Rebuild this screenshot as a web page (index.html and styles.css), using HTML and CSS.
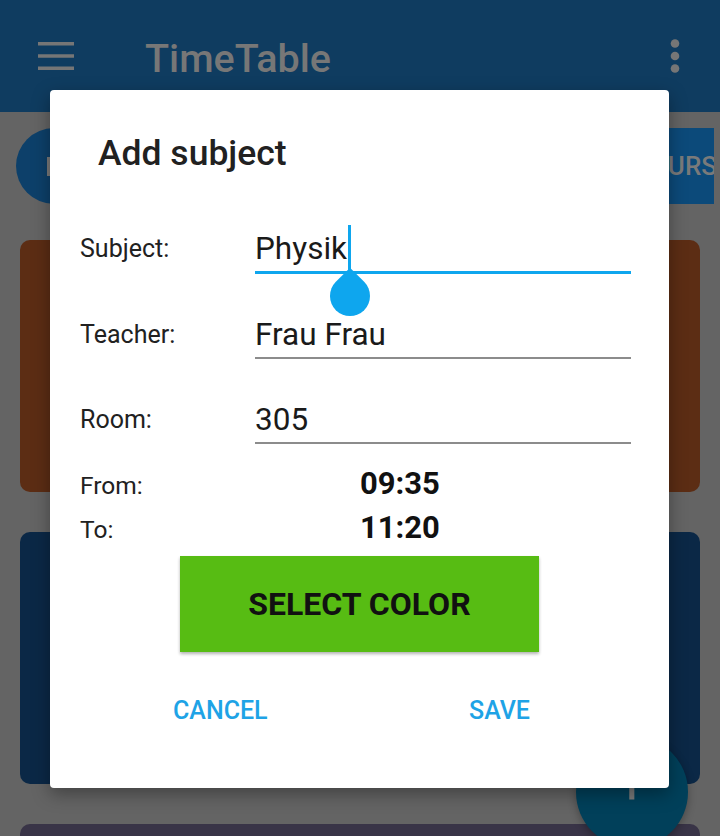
FILE: index.html
```html
<!DOCTYPE html>
<html>
<head>
<meta charset="utf-8">
<link rel="stylesheet" href="styles.css">
</head>
<body>
<div class="screen">
  <header class="appbar">
    <svg class="menu" width="36" height="28" viewBox="0 0 36 28"><rect x="0" y="0" width="36" height="3.5" fill="#767676"/><rect x="0" y="12.25" width="36" height="3.5" fill="#767676"/><rect x="0" y="24.5" width="36" height="3.5" fill="#767676"/></svg>
    <div class="apptitle">TimeTable</div>
    <svg class="dots" width="10" height="34" viewBox="0 0 10 34"><circle cx="5" cy="4.5" r="4.3" fill="#767676"/><circle cx="5" cy="17" r="4.3" fill="#767676"/><circle cx="5" cy="29.5" r="4.3" fill="#767676"/></svg>
  </header>
  <div class="tabs">
    <div class="tab tab-pill"></div>
    <div class="tab tab-rect"><span>THURS</span></div>
  </div>
  <div class="cards">
    <div class="card card-orange"></div>
    <div class="card card-blue"></div>
    <div class="card card-purple"></div>
  </div>
  <div class="fab"><span class="plus">+</span></div>

  <div class="dialog">
    <div class="dtitle">Add subject</div>
    <div class="form">
      <div class="row">
        <div class="label">Subject:</div>
        <div class="field active">Physik<span class="cursor"></span><span class="handle"></span></div>
      </div>
      <div class="row">
        <div class="label">Teacher:</div>
        <div class="field">Frau Frau</div>
      </div>
      <div class="row">
        <div class="label">Room:</div>
        <div class="field">305</div>
      </div>
      <div class="time-row first">
        <div class="tlabel">From:</div>
        <div class="tvalue">09:35</div>
      </div>
      <div class="time-row">
        <div class="tlabel">To:</div>
        <div class="tvalue">11:20</div>
      </div>
    </div>
    <div class="btnwrap"><div class="colorbtn">SELECT COLOR</div></div>
    <div class="actions">
      <div class="action">CANCEL</div>
      <div class="action">SAVE</div>
    </div>
  </div>
</div>
</body>
</html>
```
FILE: styles.css
```css
html, body {
  margin: 0;
  padding: 0;
}
.screen {
  width: 720px;
  height: 836px;
  position: relative;
  overflow: hidden;
  background: #646464;
  font-family: Roboto, "Noto Sans", sans-serif;
}
.appbar {
  height: 112px;
  background: #0f3c60;
  display: flex;
  align-items: center;
  padding: 0 40px 0 38px;
  box-sizing: border-box;
}
.menu { display: block; }
.apptitle {
  margin-left: 71px;
  margin-top: 6px;
  font-size: 39.5px;
  font-weight: 500;
  color: #777;
  line-height: 44px;
}
.dots { margin-left: auto; display: block; }
.tabs {
  display: flex;
  justify-content: space-between;
  padding: 16px 6px 0 16px;
}
.tab {
  height: 76px;
  display: flex;
  align-items: center;
  font-size: 26px;
  font-weight: 500;
  color: #7a7a7a;
}
.tab-pill {
  width: 180px;
  border-radius: 38px;
  background: #0d406a;
  position: relative;
}
.tab-pill::before {
  content: "";
  position: absolute;
  left: 31px;
  top: 29px;
  width: 4px;
  height: 19px;
  background: #7a7a7a;
}
.tab-rect {
  width: 200px;
  background: #0c4a7a;
  justify-content: flex-end;
  overflow: hidden;
}
.tab-rect span { margin-right: -3px; }
.cards {
  padding: 36px 20px 0;
  display: flex;
  flex-direction: column;
  gap: 40px;
}
.card {
  height: 252px;
  border-radius: 10px;
}
.card-orange { background: #5c2d14; }
.card-blue { background: #0b2846; }
.card-purple { background: #393447; }
.fab {
  position: absolute;
  left: 576px;
  top: 736px;
  width: 112px;
  height: 112px;
  border-radius: 50%;
  background: #01405a;
  box-shadow: 0 3px 8px rgba(0,0,0,.3);
  display: flex;
  justify-content: center;
  align-items: center;
}
.plus {
  color: #7a7a7a;
  font-size: 56px;
  line-height: 56px;
  margin-top: -14px;
}
.dialog {
  position: absolute;
  left: 50px;
  top: 90px;
  width: 619px;
  height: 698px;
  background: #fff;
  border-radius: 4px;
  box-shadow: 0 6px 18px rgba(0,0,0,.35);
  box-sizing: border-box;
}
.dtitle {
  padding: 43px 0 0 48px;
  font-size: 35.5px;
  font-weight: 500;
  line-height: 40px;
  color: #212121;
}
.form {
  padding: 0 38px 0 30px;
  margin-top: 60px;
}
.row {
  display: flex;
  align-items: baseline;
  margin-top: 45px;
}
.row:first-child { margin-top: 0; }
.label {
  width: 175px;
  font-size: 25px;
  line-height: 32px;
  color: #212121;
  position: relative;
  top: -2px;
}
.field {
  position: relative;
  width: 376px;
  font-size: 31.5px;
  line-height: 32px;
  color: #1a1a1a;
  padding-bottom: 6px;
  border-bottom: 2px solid #8c8c8c;
}
.field.active { border-bottom: 3px solid #0ea6ee; }
.cursor {
  position: absolute;
  left: 93px;
  top: -8px;
  width: 3px;
  height: 45px;
  background: #0ea6ee;
}
.handle {
  position: absolute;
  left: 75px;
  top: 43px;
  width: 40px;
  height: 40px;
  background: #0ea6ee;
  border-radius: 0 50% 50% 50%;
  transform: rotate(45deg);
}
.time-row {
  display: flex;
  align-items: baseline;
  line-height: 42px;
}
.time-row.first { margin-top: 19px; }
.tlabel {
  width: 280px;
  font-size: 24.5px;
  color: #212121;
}
.tvalue {
  font-size: 31px;
  font-weight: 700;
  color: #111;
}
.btnwrap {
  display: flex;
  justify-content: center;
  margin-top: 5px;
}
.colorbtn {
  width: 359px;
  height: 96px;
  background: #57bc13;
  box-shadow: 0 2px 3px rgba(0,0,0,.3);
  display: flex;
  align-items: center;
  justify-content: center;
  font-size: 32px;
  font-weight: 700;
  color: #111;
}
.actions {
  display: flex;
  justify-content: space-between;
  padding: 0 139px 0 123px;
  margin-top: 43px;
}
.action {
  font-size: 25px;
  font-weight: 500;
  line-height: 32px;
  color: #1ea3e6;
}
```
